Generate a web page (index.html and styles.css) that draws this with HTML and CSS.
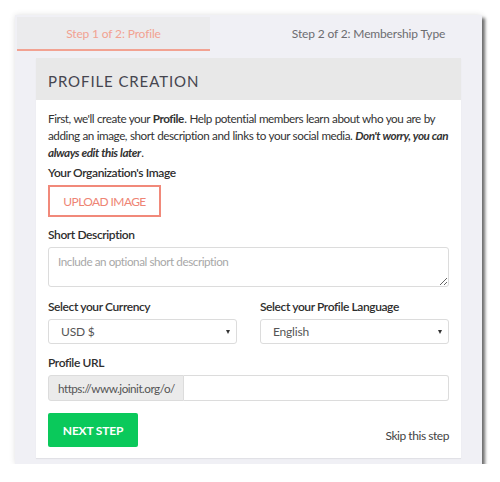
FILE: index.html
```html
<!DOCTYPE html>
<html>
<head>
  <title>Profile Creation</title>
  <link rel="stylesheet" href="styles.css">
</head>
<body>
  <div class="frame">
    <div class="tabs">
      <div class="tab active">Step 1 of 2: Profile</div>
      <div class="tab">Step 2 of 2: Membership Type</div>
    </div>

    <div class="card">
      <div class="card-header">Profile Creation</div>
      <div class="card-body">
        <p class="intro">First, we'll create your <b>Profile</b>. Help potential members learn about who you are by adding an image, short description and links to your social media. <b><i>Don't worry, you can always edit this later</i></b>.</p>

        <label class="label">Your Organization's Image</label>
        <button class="upload">UPLOAD IMAGE</button>

        <label class="label">Short Description</label>
        <textarea class="textarea" placeholder="Include an optional short description"></textarea>

        <div class="row">
          <div class="col">
            <label class="label">Select your Currency</label>
            <div class="select-wrap">
              <select class="select"><option>USD $</option></select>
            </div>
          </div>
          <div class="col">
            <label class="label">Select your Profile Language</label>
            <div class="select-wrap">
              <select class="select"><option>English</option></select>
            </div>
          </div>
        </div>

        <label class="label">Profile URL</label>
        <div class="input-group">
          <span class="addon">https://www.joinit.org/o/</span>
          <input class="url" type="text">
        </div>

        <div class="actions">
          <button class="next">NEXT STEP</button>
          <a class="skip">Skip this step</a>
        </div>
      </div>
    </div>
  </div>
</body>
</html>
```

FILE: styles.css
```css
body {
  margin: 0;
  padding: 15px 18px 0 15px;
  background: #fff;
  font-family: Lato, "Open Sans", sans-serif;
  color: #333;
}
.frame {
  width: 467px;
  height: 449px;
  box-sizing: border-box;
  background: #f0f0f5;
  padding-top: 2px;
  box-shadow: 3px 3px 3px rgba(0,0,0,0.55), 0 0 6px rgba(0,0,0,0.12);
}
.tabs {
  display: flex;
  justify-content: space-between;
  padding: 0 17px 0 2px;
}
.tab {
  width: 193px;
  height: 32px;
  line-height: 33px;
  text-align: center;
  font-size: 12px;
  letter-spacing: -0.15px;
  color: #6c6c70;
  border-bottom: 2px solid transparent;
}
.tab.active {
  background: #ebebed;
  color: #f2a292;
  border-bottom-color: #f2a292;
}
.card {
  margin: 7px 21px 0 21px;
  background: #fff;
  box-shadow: 0 1px 1px rgba(0,0,0,0.06);
}
.card-header {
  background: #e8e8e8;
  height: 42px;
  box-sizing: border-box;
  padding: 4px 12px 0 12px;
  line-height: 38px;
  font-size: 15px;
  letter-spacing: 0.9px;
  text-transform: uppercase;
  color: #45454f;
}
.card-body {
  padding: 10px 12px 11px 12px;
}
.intro {
  margin: 0 0 4px 0;
  font-size: 11.7px;
  letter-spacing: -0.45px;
  word-spacing: 0.3px;
  line-height: 17px;
}
.intro b {
  padding-right: 0.5px;
}
.label {
  display: block;
  font-size: 12px;
  letter-spacing: -0.4px;
  font-weight: 600;
  color: #2e2e2e;
  line-height: 16px;
  margin-bottom: 4px;
}
.upload {
  display: block;
  width: 113px;
  height: 32px;
  background: #fff;
  border: 2px solid #f1897a;
  color: #ee8474;
  font-family: inherit;
  font-size: 12px;
  letter-spacing: -0.6px;
  padding: 0;
  margin: 1px 0 10px 0;
}
.textarea {
  display: block;
  width: 100%;
  height: 40px;
  box-sizing: border-box;
  border: 1px solid #dcdcdc;
  border-radius: 3px;
  padding: 6px 9px;
  font-family: inherit;
  font-size: 11.7px;
  letter-spacing: -0.45px;
  color: #333;
  margin-bottom: 12px;
}
.textarea::placeholder {
  color: #a8a8a8;
}
.row {
  display: flex;
  gap: 23px;
  margin-bottom: 11px;
}
.col {
  flex: 1;
}
.select-wrap {
  position: relative;
}
.select-wrap::after {
  content: "";
  position: absolute;
  right: 7px;
  top: 11px;
  border-left: 2.5px solid transparent;
  border-right: 2.5px solid transparent;
  border-top: 4px solid #333;
}
.select {
  appearance: none;
  -webkit-appearance: none;
  display: block;
  width: 100%;
  height: 25px;
  border: 1px solid #dcdcdc;
  border-radius: 3px;
  background: #fff;
  padding: 0 12px;
  font-family: inherit;
  font-size: 12px;
  letter-spacing: -0.2px;
  color: #555;
}
.input-group {
  display: flex;
  height: 26px;
  margin-bottom: 12px;
}
.addon {
  width: 136px;
  box-sizing: border-box;
  background: #ebebeb;
  border: 1px solid #dcdcdc;
  border-radius: 3px 0 0 3px;
  padding-left: 9px;
  line-height: 24px;
  font-size: 11.7px;
  letter-spacing: -0.5px;
  color: #555;
}
.url {
  flex: 1;
  border: 1px solid #dcdcdc;
  border-left: none;
  border-radius: 0 3px 3px 0;
  outline: none;
}
.actions {
  display: flex;
  justify-content: space-between;
  align-items: flex-end;
}
.next {
  width: 90px;
  height: 34px;
  background: #0ac95b;
  border: none;
  border-radius: 2px;
  color: #fff;
  font-family: inherit;
  font-weight: bold;
  font-size: 12px;
  letter-spacing: -0.2px;
  padding: 0;
}
.skip {
  font-size: 12px;
  letter-spacing: -0.45px;
  color: #444;
  margin-bottom: 4px;
}
```
